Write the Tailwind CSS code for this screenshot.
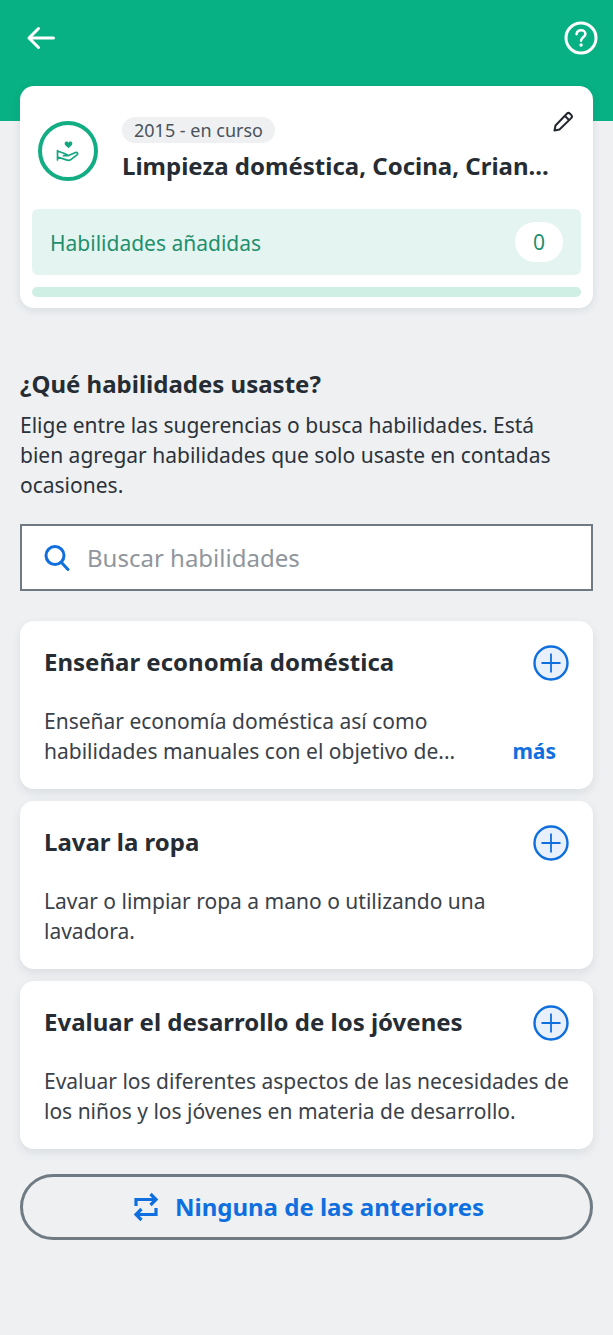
<!DOCTYPE html>
<html lang="es">
<head>
  <meta charset="UTF-8" />
  <meta name="viewport" content="width=device-width, initial-scale=1.0"/>
  <title>Habilidades</title>
  <script src="https://cdn.jsdelivr.net/npm/@tailwindcss/browser@4"></script>
</head>
<body class="bg-[#eef0f2] font-['Noto_Sans',sans-serif] text-[#262c33]">
<div class="w-[613px] h-[1335px] overflow-hidden">

  <!-- Header -->
  <header class="bg-[#07b183] h-[121px] flex justify-between items-start pl-[26px] pr-[15px] pt-[21px]">
    <svg class="w-[30px] h-[34px]" viewBox="0 0 30 34" fill="none" stroke="#fff" stroke-width="3" stroke-linecap="round" stroke-linejoin="round"><path d="M3 17H27.500M12.500 7.500L3 17L12.500 26.500"/></svg>
    <svg class="w-[34px] h-[34px]" viewBox="0 0 34 34" fill="none" stroke="#fff"><circle cx="17" cy="17" r="15" stroke-width="3"/><path d="M12.600 13.200c.3-2.500 2.200-3.900 4.500-3.900 2.500 0 4.300 1.600 4.300 3.700 0 3.200-4.300 3.300-4.300 6.600" stroke-width="2.600" stroke-linecap="round"/><circle cx="17.100" cy="24" r="1.700" fill="#fff" stroke="none"/></svg>
  </header>

  <main class="px-5">
    <!-- Job card -->
    <section class="relative -mt-[35px] bg-white rounded-[14px] shadow-[0_2px_8px_rgba(60,70,80,0.12)] h-[222px] px-3 pt-[35px]">
      <div class="flex pl-[6px]">
        <div class="w-[60px] h-[60px] rounded-full border-[4px] border-[#13ad83] flex items-center justify-center shrink-0">
          <svg class="w-[24px] h-[24px]" viewBox="0 0 24 24" fill="none" stroke="#13a67f" stroke-width="1.700" stroke-linejoin="round" stroke-linecap="round"><path d="M12.500 9.300L9.300 6.200C7.900 4.600 9 2.600 10.600 2.600c.9 0 1.500.5 1.900 1.100.4-.6 1-1.100 1.900-1.100 1.600 0 2.700 2 1.300 3.600z" fill="#13a67f" stroke="none"/><path d="M1.500 11.500v9.500M1.500 12l7 2.500c1.500.6 3 1.200 3.500 2.200H7.500M12 16.700l7.500-3.200c1.800-.6 3 1 1.500 2.300l-6.500 5c-1 .7-2.200.8-3.300.3L1.500 18"/></svg>
        </div>
        <div class="ml-6 -mt-[4px] flex-1 min-w-0">
          <span class="inline-block bg-[#eef0f2] rounded-full h-[26px] leading-[26px] px-3 text-[18px] text-[#4a525b]">2015 - en curso</span>
          <h2 class="mt-[7px] text-[24px] leading-[32px] font-bold whitespace-nowrap">Limpieza doméstica, Cocina, Crian...</h2>
        </div>
      </div>
      <svg class="absolute right-[18px] top-[24px] w-[24px] h-[24px]" viewBox="0 0 24 24" fill="none" stroke="#22272e" stroke-width="2" stroke-linejoin="round"><path d="M3.500 20.500l1-5L15.800 3.700c.9-.9 2.300-.9 3.200 0l1.200 1.200c.9.900.9 2.300 0 3.200L8.500 19.500z"/><path d="M14 6l4.500 4.500"/></svg>

      <div class="mt-[27px] bg-[#e4f5f1] rounded-[6px] h-[66px] flex items-center justify-between pl-[18px] pr-[18px]">
        <span class="text-[21px] pt-[3px] text-[#1f8f6c]">Habilidades añadidas</span>
        <span class="w-[48px] h-[40px] rounded-full bg-white flex items-center justify-center pt-[2px] text-[21px] text-[#1f8f6c]">0</span>
      </div>
      <div class="mt-3 h-[10px] rounded-full bg-[#cfefe4]"></div>
    </section>

    <!-- Intro -->
    <h3 class="mt-[61px] text-[24px] leading-[30px] font-bold">¿Qué habilidades usaste?</h3>
    <p class="mt-[11px] text-[21px] leading-[30px] text-[#2c323a]">Elige entre las sugerencias o busca habilidades. Está<br>bien agregar habilidades que solo usaste en contadas<br>ocasiones.</p>

    <!-- Search -->
    <div class="mt-[24px] h-[67px] bg-white border-2 border-[#6f7a83] flex items-center pl-[21px]">
      <svg class="w-[28px] h-[30px]" viewBox="0 0 28 30" fill="none" stroke="#0f6fde" stroke-width="3" stroke-linecap="round"><circle cx="12" cy="12.500" r="9"/><path d="M18.500 19.500l6.500 7"/></svg>
      <span class="ml-[16px] text-[24px] text-[#8f969d]">Buscar habilidades</span>
    </div>

    <!-- Suggestions -->
    <div class="mt-[30px] flex flex-col gap-3">
      <article class="bg-white rounded-[14px] shadow-[0_4px_10px_rgba(60,70,80,0.10)] h-[168px] pl-6 pr-6 pt-[24px]">
        <div class="flex justify-between items-start">
          <h4 class="text-[24px] leading-[34px] font-bold">Enseñar economía doméstica</h4>
          <svg class="w-[36px] h-[36px]" viewBox="0 0 36 36" fill="#e8f1fb" stroke="#0f6fde"><circle cx="18" cy="18" r="16.500" stroke-width="2.400"/><path d="M18 8.500v19M8.500 18h19" stroke-width="1.800" fill="none"/></svg>
        </div>
        <div class="mt-[25px] relative text-[21px] leading-[30px] text-[#3a4149]">
          <p>Enseñar economía doméstica así como<br>habilidades manuales con el objetivo de...</p>
          <span class="absolute right-[13px] bottom-0 font-bold text-[#0f6fde]">más</span>
        </div>
      </article>

      <article class="bg-white rounded-[14px] shadow-[0_4px_10px_rgba(60,70,80,0.10)] h-[168px] pl-6 pr-6 pt-[24px]">
        <div class="flex justify-between items-start">
          <h4 class="text-[24px] leading-[34px] font-bold">Lavar la ropa</h4>
          <svg class="w-[36px] h-[36px]" viewBox="0 0 36 36" fill="#e8f1fb" stroke="#0f6fde"><circle cx="18" cy="18" r="16.500" stroke-width="2.400"/><path d="M18 8.500v19M8.500 18h19" stroke-width="1.800" fill="none"/></svg>
        </div>
        <p class="mt-[25px] text-[21px] leading-[30px] text-[#3a4149]">Lavar o limpiar ropa a mano o utilizando una<br>lavadora.</p>
      </article>

      <article class="bg-white rounded-[14px] shadow-[0_4px_10px_rgba(60,70,80,0.10)] h-[168px] pl-6 pr-6 pt-[24px]">
        <div class="flex justify-between items-start">
          <h4 class="text-[24px] leading-[34px] font-bold">Evaluar el desarrollo de los jóvenes</h4>
          <svg class="w-[36px] h-[36px]" viewBox="0 0 36 36" fill="#e8f1fb" stroke="#0f6fde"><circle cx="18" cy="18" r="16.500" stroke-width="2.400"/><path d="M18 8.500v19M8.500 18h19" stroke-width="1.800" fill="none"/></svg>
        </div>
        <p class="mt-[25px] text-[21px] leading-[30px] text-[#3a4149]">Evaluar los diferentes aspectos de las necesidades de<br>los niños y los jóvenes en materia de desarrollo.</p>
      </article>
    </div>

    <!-- None of the above -->
    <button class="mt-[25px] w-full h-[66px] rounded-full border-[3px] border-[#6f7a83] flex items-center justify-center gap-[16px] pl-[4px] text-[24px] font-bold text-[#0f6fde]">
      <svg class="w-[26px] h-[30px]" viewBox="0 0 26 30" fill="none" stroke="#0f6fde" stroke-width="3.200"><path d="M3 14V7.500H22"/><path d="M17.500 2l5.500 5.500-5.500 5.500"/><path d="M23 16v6.500H4"/><path d="M8.500 17L3 22.500 8.500 28"/></svg>
      Ninguna de las anteriores
    </button>
  </main>
</div>
</body>
</html>
